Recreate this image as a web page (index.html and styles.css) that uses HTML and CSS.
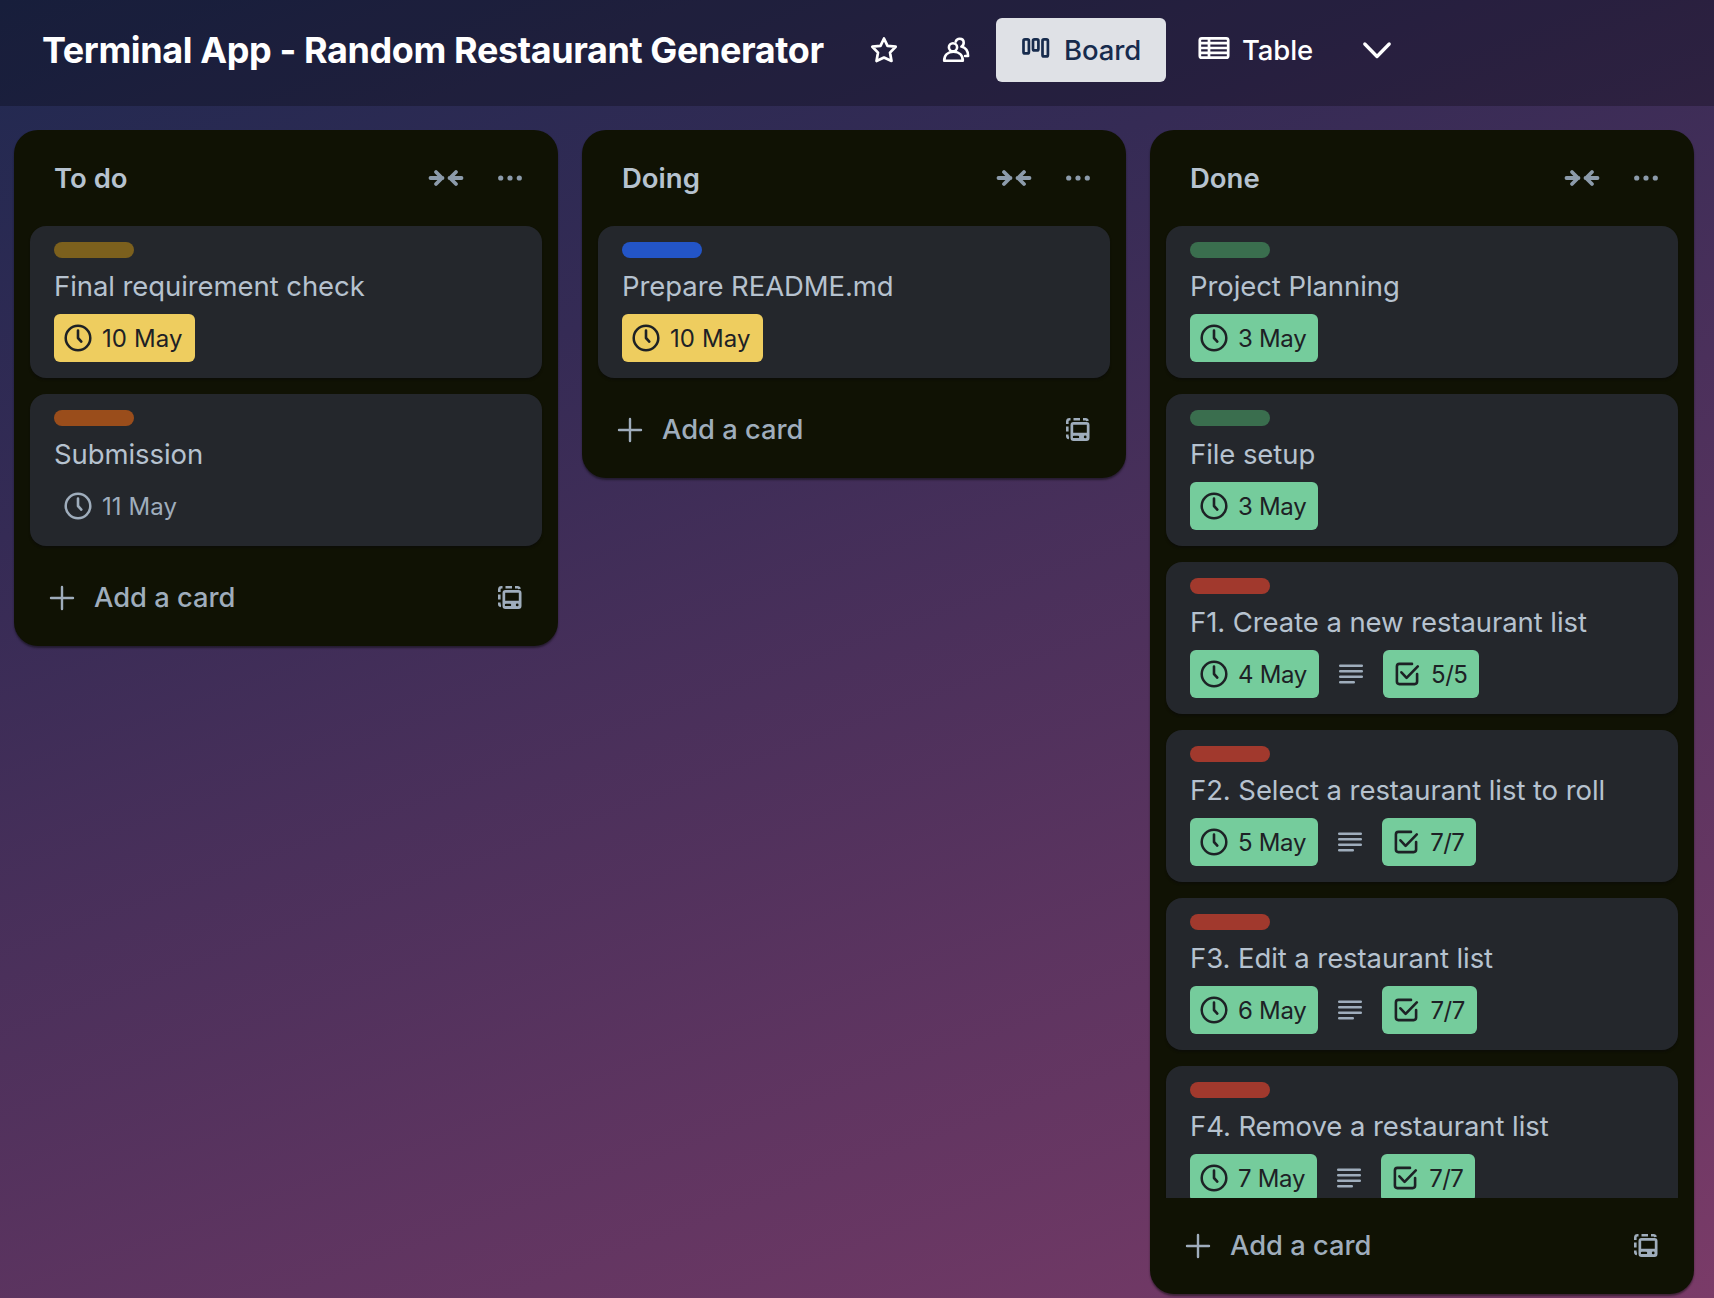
FILE: index.html
```html
<!DOCTYPE html>
<html lang="en">
<head>
<meta charset="utf-8">
<title>Terminal App - Random Restaurant Generator</title>
<link rel="stylesheet" href="styles.css">
</head>
<body>
<svg class="defs" aria-hidden="true">
  <symbol id="clock" viewBox="0 0 32 32"><g fill="none" stroke="currentColor" stroke-linecap="round" stroke-linejoin="round"><circle cx="16" cy="16" r="12.3" stroke-width="2.5"/><path d="M16 8.500v7.500l3.300 3.600" stroke-width="2.600"/></g></symbol>
  <symbol id="lines" viewBox="0 0 32 32"><path d="M5.200 7.800h21.600M5.200 13.300h21.600M5.200 18.700h21.600M5.200 24.200h13.600" stroke="currentColor" stroke-width="2.500" stroke-linecap="round"/></symbol>
  <symbol id="check" viewBox="0 0 32 32"><path d="M21 5.900H8.400A2.500 2.500 0 0 0 5.900 8.400v15.200a2.500 2.500 0 0 0 2.500 2.500h15.200a2.500 2.500 0 0 0 2.500-2.500V16M10.400 14.300l5.200 5.500L26.800 8.400" fill="none" stroke="currentColor" stroke-width="2.600" stroke-linecap="round" stroke-linejoin="round"/></symbol>
  <symbol id="collapse" viewBox="0 0 36 32"><path d="M2.500 16h12M8 10l6 6-6 6M33.500 16h-12M28 10l-6 6 6 6" fill="none" stroke="currentColor" stroke-width="3.800" stroke-linecap="round" stroke-linejoin="round"/></symbol>
  <symbol id="dots" viewBox="0 0 32 32"><g fill="currentColor"><circle cx="6.700" cy="16" r="2.600"/><circle cx="16" cy="16" r="2.600"/><circle cx="25.300" cy="16" r="2.600"/></g></symbol>
  <symbol id="plus" viewBox="0 0 32 32"><path d="M16 5v22M5 16h22" stroke="currentColor" stroke-width="2.400" stroke-linecap="round"/></symbol>
  <symbol id="template" viewBox="0 0 32 32"><path d="M5.300 10V7.500A2.300 2.300 0 0 1 7.600 5.300H8.500M11.500 5.300h6.500M21 5.300h2.500a2 2 0 0 1 2 1.700M5.300 12.500v5M5.300 20.500v1.500a2 2 0 0 0 1.700 2" fill="none" stroke="currentColor" stroke-width="2.600"/><path fill="currentColor" fill-rule="evenodd" d="M11.500 8h13a3 3 0 0 1 3 3v13a3 3 0 0 1-3 3h-13a3 3 0 0 1-3-3V11a3 3 0 0 1 3-3zM11.200 10.700v8h13.600v-8zM12 21.700h4a1.200 1.200 0 0 1 0 2.400h-4a1.200 1.200 0 0 1 0-2.400zM23.200 21.500a1.400 1.400 0 1 0 0 2.800 1.400 1.400 0 0 0 0-2.800z"/></symbol>
</svg>

<header class="topbar">
  <h1 class="board-name">Terminal App - Random Restaurant Generator</h1>
  <svg class="icon star" viewBox="0 0 32 32"><path d="M16 4.500l3.500 7.300 8.200.9-5.700 5.900 1.500 8.400L16 23.500 8.500 27l1.500-8.400-5.700-5.900 8.200-.9z" fill="none" stroke="currentColor" stroke-width="2.700" stroke-linejoin="round"/></svg>
  <svg class="icon people" viewBox="0 0 32 32"><g fill="none" stroke="currentColor" stroke-width="2.600" stroke-linecap="round" stroke-linejoin="round"><circle cx="13" cy="13.300" r="4.100"/><path d="M4.200 26.800c0-5.600 3.600-9 9.300-9s9.300 3.400 9.300 9z"/><path d="M15.700 7.600c.7-2 2-2.900 3.900-2.900 2.500 0 4.100 1.700 4.100 4.100 0 1.700-.8 3-2.300 3.800 4.300 1.200 6.700 4.700 6.700 9.400h-3"/></g></svg>
  <div class="view active">
    <svg class="icon" viewBox="0 0 32 32"><g fill="none" stroke="currentColor" stroke-width="2.700"><rect x="3.500" y="7.400" width="5.400" height="14" rx="1.500"/><rect x="13" y="7.400" width="5.400" height="11" rx="1.500"/><rect x="22.500" y="7.400" width="5.400" height="17" rx="1.500"/></g></svg>
    <span class="view-name">Board</span>
  </div>
  <div class="view table">
    <svg class="icon" viewBox="0 0 32 32"><g fill="none" stroke="currentColor" stroke-width="2.700"><rect x="1.800" y="6.300" width="28.400" height="19.400" rx="2"/><path d="M2 11.200h28M2 16h28M2 20.800h28M11 6.500v19"/></g></svg>
    <span class="view-name">Table</span>
  </div>
  <svg class="icon chevron" viewBox="0 0 32 32"><path d="M3.800 10L16 22.500 28.200 10" fill="none" stroke="currentColor" stroke-width="3.300" stroke-linecap="round" stroke-linejoin="round"/></svg>
</header>

<main class="board">
  <section class="list">
    <div class="list-head"><h2 class="list-name">To do</h2><svg class="collapse"><use href="#collapse"/></svg><svg class="icon"><use href="#dots"/></svg></div>
    <div class="cards">
      <article class="card"><div class="label yellow"></div><p class="card-name">Final requirement check</p>
        <div class="badges"><span class="badge due-soon"><svg class="icon"><use href="#clock"/></svg><span class="badge-text two-digit">10 May</span></span></div></article>
      <article class="card"><div class="label orange"></div><p class="card-name">Submission</p>
        <div class="badges"><span class="badge"><svg class="icon"><use href="#clock"/></svg><span class="badge-text two-digit">11 May</span></span></div></article>
    </div>
    <div class="list-foot"><svg class="icon"><use href="#plus"/></svg><span class="add">Add a card</span><svg class="icon"><use href="#template"/></svg></div>
  </section>

  <section class="list">
    <div class="list-head"><h2 class="list-name">Doing</h2><svg class="collapse"><use href="#collapse"/></svg><svg class="icon"><use href="#dots"/></svg></div>
    <div class="cards">
      <article class="card"><div class="label blue"></div><p class="card-name">Prepare README.md</p>
        <div class="badges"><span class="badge due-soon"><svg class="icon"><use href="#clock"/></svg><span class="badge-text two-digit">10 May</span></span></div></article>
    </div>
    <div class="list-foot"><svg class="icon"><use href="#plus"/></svg><span class="add">Add a card</span><svg class="icon"><use href="#template"/></svg></div>
  </section>

  <section class="list">
    <div class="list-head"><h2 class="list-name">Done</h2><svg class="collapse"><use href="#collapse"/></svg><svg class="icon"><use href="#dots"/></svg></div>
    <div class="cards">
      <article class="card"><div class="label green"></div><p class="card-name">Project Planning</p>
        <div class="badges"><span class="badge done"><svg class="icon"><use href="#clock"/></svg><span class="badge-text">3 May</span></span></div></article>
      <article class="card"><div class="label green"></div><p class="card-name">File setup</p>
        <div class="badges"><span class="badge done"><svg class="icon"><use href="#clock"/></svg><span class="badge-text">3 May</span></span></div></article>
      <article class="card"><div class="label red"></div><p class="card-name">F1. Create a new restaurant list</p>
        <div class="badges"><span class="badge done"><svg class="icon"><use href="#clock"/></svg><span class="badge-text">4 May</span></span><span class="badge"><svg class="icon"><use href="#lines"/></svg></span><span class="badge done"><svg class="icon"><use href="#check"/></svg><span class="badge-text count">5/5</span></span></div></article>
      <article class="card"><div class="label red"></div><p class="card-name">F2. Select a restaurant list to roll</p>
        <div class="badges"><span class="badge done"><svg class="icon"><use href="#clock"/></svg><span class="badge-text">5 May</span></span><span class="badge"><svg class="icon"><use href="#lines"/></svg></span><span class="badge done"><svg class="icon"><use href="#check"/></svg><span class="badge-text count">7/7</span></span></div></article>
      <article class="card"><div class="label red"></div><p class="card-name">F3. Edit a restaurant list</p>
        <div class="badges"><span class="badge done"><svg class="icon"><use href="#clock"/></svg><span class="badge-text">6 May</span></span><span class="badge"><svg class="icon"><use href="#lines"/></svg></span><span class="badge done"><svg class="icon"><use href="#check"/></svg><span class="badge-text count">7/7</span></span></div></article>
      <article class="card"><div class="label red"></div><p class="card-name">F4. Remove a restaurant list</p>
        <div class="badges"><span class="badge done"><svg class="icon"><use href="#clock"/></svg><span class="badge-text">7 May</span></span><span class="badge"><svg class="icon"><use href="#lines"/></svg></span><span class="badge done"><svg class="icon"><use href="#check"/></svg><span class="badge-text count">7/7</span></span></div></article>
    </div>
    <div class="list-foot"><svg class="icon"><use href="#plus"/></svg><span class="add">Add a card</span><svg class="icon"><use href="#template"/></svg></div>
  </section>
</main>
</body>
</html>
```
FILE: styles.css
```css
* { box-sizing: border-box; }
body {
  margin: 0;
  height: 1298px;
  overflow: hidden;
  display: flex;
  flex-direction: column;
  font-family: Inter, "Liberation Sans", sans-serif;
  background: linear-gradient(160deg, #202950 0%, #352b55 28%, #7a3b68 100%);
}
.defs { position: absolute; width: 0; height: 0; }
.icon { width: 32px; height: 32px; flex: none; display: block; }

.topbar {
  height: 106px;
  flex: none;
  display: flex;
  align-items: center;
  padding: 0 0 6px 42px;
  background: rgba(0, 0, 0, 0.26);
  color: #fff;
}
.board-name {
  margin: 0;
  width: 783px;
  font-size: 36px;
  font-weight: 700;
  line-height: 44px;
  letter-spacing: -0.4px;
  white-space: nowrap;
}
.star { margin-left: 43px; }
.people { margin-left: 40px; }
.view {
  height: 64px;
  display: flex;
  align-items: center;
  gap: 12px;
  border-radius: 6px;
}
.view .icon { margin-bottom: 4px; }
.view-name { font-size: 27.5px; font-weight: 500; line-height: 40px; letter-spacing: -0.1px; }
.active { width: 170px; margin-left: 24px; padding-left: 24px; background: #dfe1e6; color: #172b4d; }
.table { width: 164px; padding-left: 32px; }
.chevron { margin-left: 31px; }

.board {
  flex: 1;
  min-height: 0;
  display: flex;
  align-items: flex-start;
  gap: 24px;
  padding: 24px 20px 4px 14px;
}
.list {
  width: 544px;
  max-height: 100%;
  flex: none;
  display: flex;
  flex-direction: column;
  border-radius: 24px;
  background: #101204;
  box-shadow: 0 2px 2px rgba(9, 9, 9, 0.5);
}
.list-head {
  height: 96px;
  flex: none;
  display: flex;
  align-items: center;
  padding: 0 32px 0 40px;
  color: #8c9bab;
}
.list-name {
  flex: 1;
  margin: 0;
  font-size: 27.5px;
  font-weight: 600;
  line-height: 40px;
  color: #b6c2cf;
}
.collapse { width: 36px; height: 32px; margin-right: 30px; }
.cards {
  min-height: 0;
  overflow: hidden;
  display: flex;
  flex-direction: column;
  gap: 16px;
  padding: 0 16px 4px;
}
.card {
  height: 152px;
  flex: none;
  padding: 16px 24px;
  border-radius: 16px;
  background: #24272c;
  box-shadow: 0 2px 2px rgba(9, 9, 9, 0.5);
}
.label { width: 80px; height: 16px; border-radius: 8px; }
.yellow { background: #7c601d; }
.orange { background: #9a4d1b; }
.blue { background: #2355c7; }
.green { background: #3a6e4e; }
.red { background: #a1392d; }
.card-name {
  margin: 8px 0;
  font-size: 27.5px;
  font-weight: 420;
  line-height: 40px;
  letter-spacing: -0.08px;
  white-space: nowrap;
  color: #b6c2cf;
}
.badges { display: flex; gap: 8px; }
.badge {
  height: 48px;
  display: flex;
  align-items: center;
  padding: 0 8px;
  border-radius: 6px;
  color: #9fadbc;
}
.badge-text { padding: 1px 4px 0 8px; font-size: 24px; line-height: 40px; letter-spacing: -0.3px; white-space: nowrap; }
.two-digit { letter-spacing: 0.1px; }
.count { letter-spacing: -0.5px; }
.due-soon { background: #eecd5f; color: #1d2125; }
.done { background: #75cc9c; color: #1d2125; }
.list-foot {
  height: 96px;
  flex: none;
  display: flex;
  align-items: center;
  padding: 0 32px;
  color: #9fadbc;
}
.add { flex: 1; margin-left: 16px; font-size: 27.3px; font-weight: 500; line-height: 40px; }
```
